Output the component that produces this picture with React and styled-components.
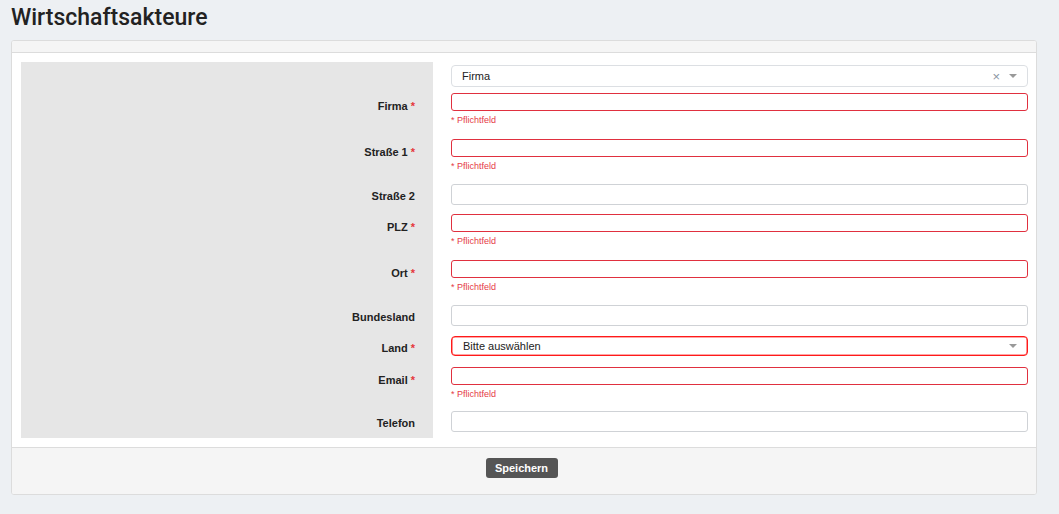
import React from 'react';
import styled, { createGlobalStyle } from 'styled-components';

const GlobalStyle = createGlobalStyle`
  html, body {
    margin: 0;
    padding: 0;
    background: #edf0f3;
  }
  body {
    font-family: "Liberation Sans", Arial, sans-serif;
    color: #222;
  }
`;

const Page = styled.div`
  padding: 5px 22px 20px 11px;
`;

const PageTitle = styled.h1`
  margin: 0 0 9px;
  font-family: Roboto, "Liberation Sans", sans-serif;
  font-size: 23px;
  line-height: 26px;
  font-weight: 500;
  color: #222;
`;

const Card = styled.div`
  background: #fff;
  border: 1px solid #dcdcdc;
  border-radius: 3px;
  overflow: hidden;
`;

const CardHeader = styled.div`
  height: 11px;
  background: #f5f5f5;
  border-bottom: 1px solid #dcdcdc;
`;

const CardBody = styled.div`
  padding: 9px 8px 9px 9px;
`;

const FormGrid = styled.div`
  display: grid;
  grid-template-columns: 412px 1fr;
  column-gap: 18px;
`;

const LabelCell = styled.div`
  background: #e6e6e6;
  text-align: right;
  padding: ${(p) => (p.$first ? '8px' : p.$error ? '5px' : '3.5px')} 18px 0 0;
  font-size: 11px;
  font-weight: bold;
  line-height: 16px;
  color: #222;
`;

const Star = styled.span`
  color: #e5383b;
  margin-left: 3px;
`;

const FieldCell = styled.div`
  padding-top: ${(p) => (p.$first ? '3px' : '0')};
  padding-bottom: ${(p) => p.$gap}px;
`;

const TextInput = styled.div`
  box-sizing: border-box;
  height: ${(p) => (p.$error ? 18 : 21)}px;
  border: 1px solid ${(p) => (p.$error ? '#e0303f' : '#cfd2d6')};
  border-radius: 3px;
  background: #fff;
`;

const Select = styled.div`
  box-sizing: border-box;
  height: ${(p) => p.$h}px;
  display: flex;
  align-items: center;
  padding: 0 10px 0 ${(p) => (p.$error ? 11 : 10)}px;
  border: 1px solid ${(p) => (p.$error ? '#ff1a1a' : '#dcdfe3')};
  box-shadow: ${(p) => (p.$error ? 'inset 0 0 0 0.6px #ff4d4d' : 'none')};
  border-radius: 4px;
  background: #fff;
  font-size: 11px;
  color: #222;
`;

const SelectValue = styled.span`
  flex: 1;
`;

const ClearIcon = styled.span`
  color: #8a96a3;
  font-size: 13px;
  line-height: 1;
  margin-right: 9px;
`;

const Caret = styled.span`
  width: 0;
  height: 0;
  border-left: 4px solid transparent;
  border-right: 4px solid transparent;
  border-top: 4px solid #999;
`;

const ErrorText = styled.div`
  box-sizing: border-box;
  height: 18px;
  padding-top: 2px;
  font-size: 9px;
  line-height: 15px;
  color: #e53b47;
`;

const CardFooter = styled.div`
  background: #f5f5f5;
  border-top: 1px solid #dcdcdc;
  padding: 10px 0 16px;
  display: flex;
  justify-content: center;
`;

const Button = styled.button`
  height: 20px;
  width: 72px;
  border: none;
  border-radius: 3px;
  background: #555;
  color: #fff;
  font-family: "Liberation Sans", Arial, sans-serif;
  font-size: 11px;
  font-weight: bold;
  padding: 0;
  margin-left: -5px;
`;

const rows = [
  { kind: 'select', value: 'Firma', clear: true, h: 22, gap: 6 },
  { label: 'Firma', required: true, error: true, gap: 10 },
  { label: 'Straße 1', required: true, error: true },
  { label: 'Straße 2' },
  { label: 'PLZ', required: true, error: true, gap: 10 },
  { label: 'Ort', required: true, error: true },
  { label: 'Bundesland', gap: 10 },
  { label: 'Land', required: true, kind: 'select', value: 'Bitte auswählen', h: 20, gap: 11, selectError: true },
  { label: 'Email', required: true, error: true, gap: 8 },
  { label: 'Telefon', gap: 6 },
];

const App = () => (
  <>
    <GlobalStyle />
    <Page>
      <PageTitle>Wirtschaftsakteure</PageTitle>
      <Card>
        <CardHeader />
        <CardBody>
          <FormGrid>
            {rows.map((r, i) => (
              <React.Fragment key={i}>
                <LabelCell $error={r.error}>
                  {r.label}
                  {r.required && <Star>*</Star>}
                </LabelCell>
                <FieldCell $first={i === 0} $gap={r.gap ?? 9}>
                  {r.kind === 'select' ? (
                    <Select $h={r.h} $error={r.selectError}>
                      <SelectValue>{r.value}</SelectValue>
                      {r.clear && <ClearIcon>×</ClearIcon>}
                      <Caret />
                    </Select>
                  ) : (
                    <>
                      <TextInput $error={r.error} />
                      {r.error && <ErrorText>* Pflichtfeld</ErrorText>}
                    </>
                  )}
                </FieldCell>
              </React.Fragment>
            ))}
          </FormGrid>
        </CardBody>
        <CardFooter>
          <Button>Speichern</Button>
        </CardFooter>
      </Card>
    </Page>
  </>
);

export default App;
